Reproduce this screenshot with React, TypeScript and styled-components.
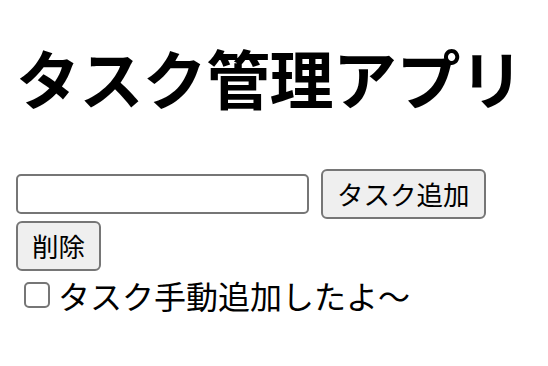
import React, { useState } from 'react';
import styled, { createGlobalStyle } from 'styled-components';

const GlobalStyle = createGlobalStyle`
  body {
    margin: 16px;
    background: #ffffff;
    color: #000000;
    font-family: "Noto Sans CJK JP", "Noto Sans", sans-serif;
  }
`;

const STitle = styled.h1`
  margin: 16px 0 49px;
  font-size: 64px;
  line-height: 88px;
  font-weight: 700;
  letter-spacing: -0.6px;
`;

const SFormRow = styled.div`
  display: flex;
  align-items: center;
  gap: 12px;
`;

const SInput = styled.input`
  box-sizing: border-box;
  width: 293px;
  height: 40px;
  margin: 0;
  padding: 2px 4px;
  border: 2px solid #767676;
  border-radius: 5px;
  font-size: 26px;
  font-family: inherit;
`;

const SButton = styled.button`
  box-sizing: border-box;
  height: 50px;
  margin: 0;
  padding: 0 14px;
  background: #efefef;
  border: 2px solid #767676;
  border-radius: 6px;
  color: #000000;
  font-size: 26.5px;
  font-family: inherit;
  line-height: 1;
`;

const SDeleteRow = styled.div`
  margin-top: 2px;
`;

const STaskList = styled.ul`
  margin: 0;
  padding: 0;
  list-style: none;
`;

const STaskItem = styled.li`
  display: flex;
  align-items: center;
  height: 48px;
  font-size: 32px;
`;

const SCheckbox = styled.input`
  appearance: none;
  box-sizing: border-box;
  width: 26px;
  height: 26px;
  margin: 0 8px 0 8px;
  border: 2px solid #767676;
  border-radius: 5px;
  background: #ffffff;
`;

export default function App() {
  const [text, setText] = useState('');
  const [tasks] = useState(['タスク手動追加したよ〜']);

  return (
    <>
      <GlobalStyle />
      <STitle>タスク管理アプリ</STitle>
      <SFormRow>
        <SInput value={text} onChange={(e) => setText(e.target.value)} />
        <SButton>タスク追加</SButton>
      </SFormRow>
      <SDeleteRow>
        <SButton>削除</SButton>
      </SDeleteRow>
      <STaskList>
        {tasks.map((t) => (
          <STaskItem key={t}>
            <SCheckbox type="checkbox" />
            {t}
          </STaskItem>
        ))}
      </STaskList>
    </>
  );
}
